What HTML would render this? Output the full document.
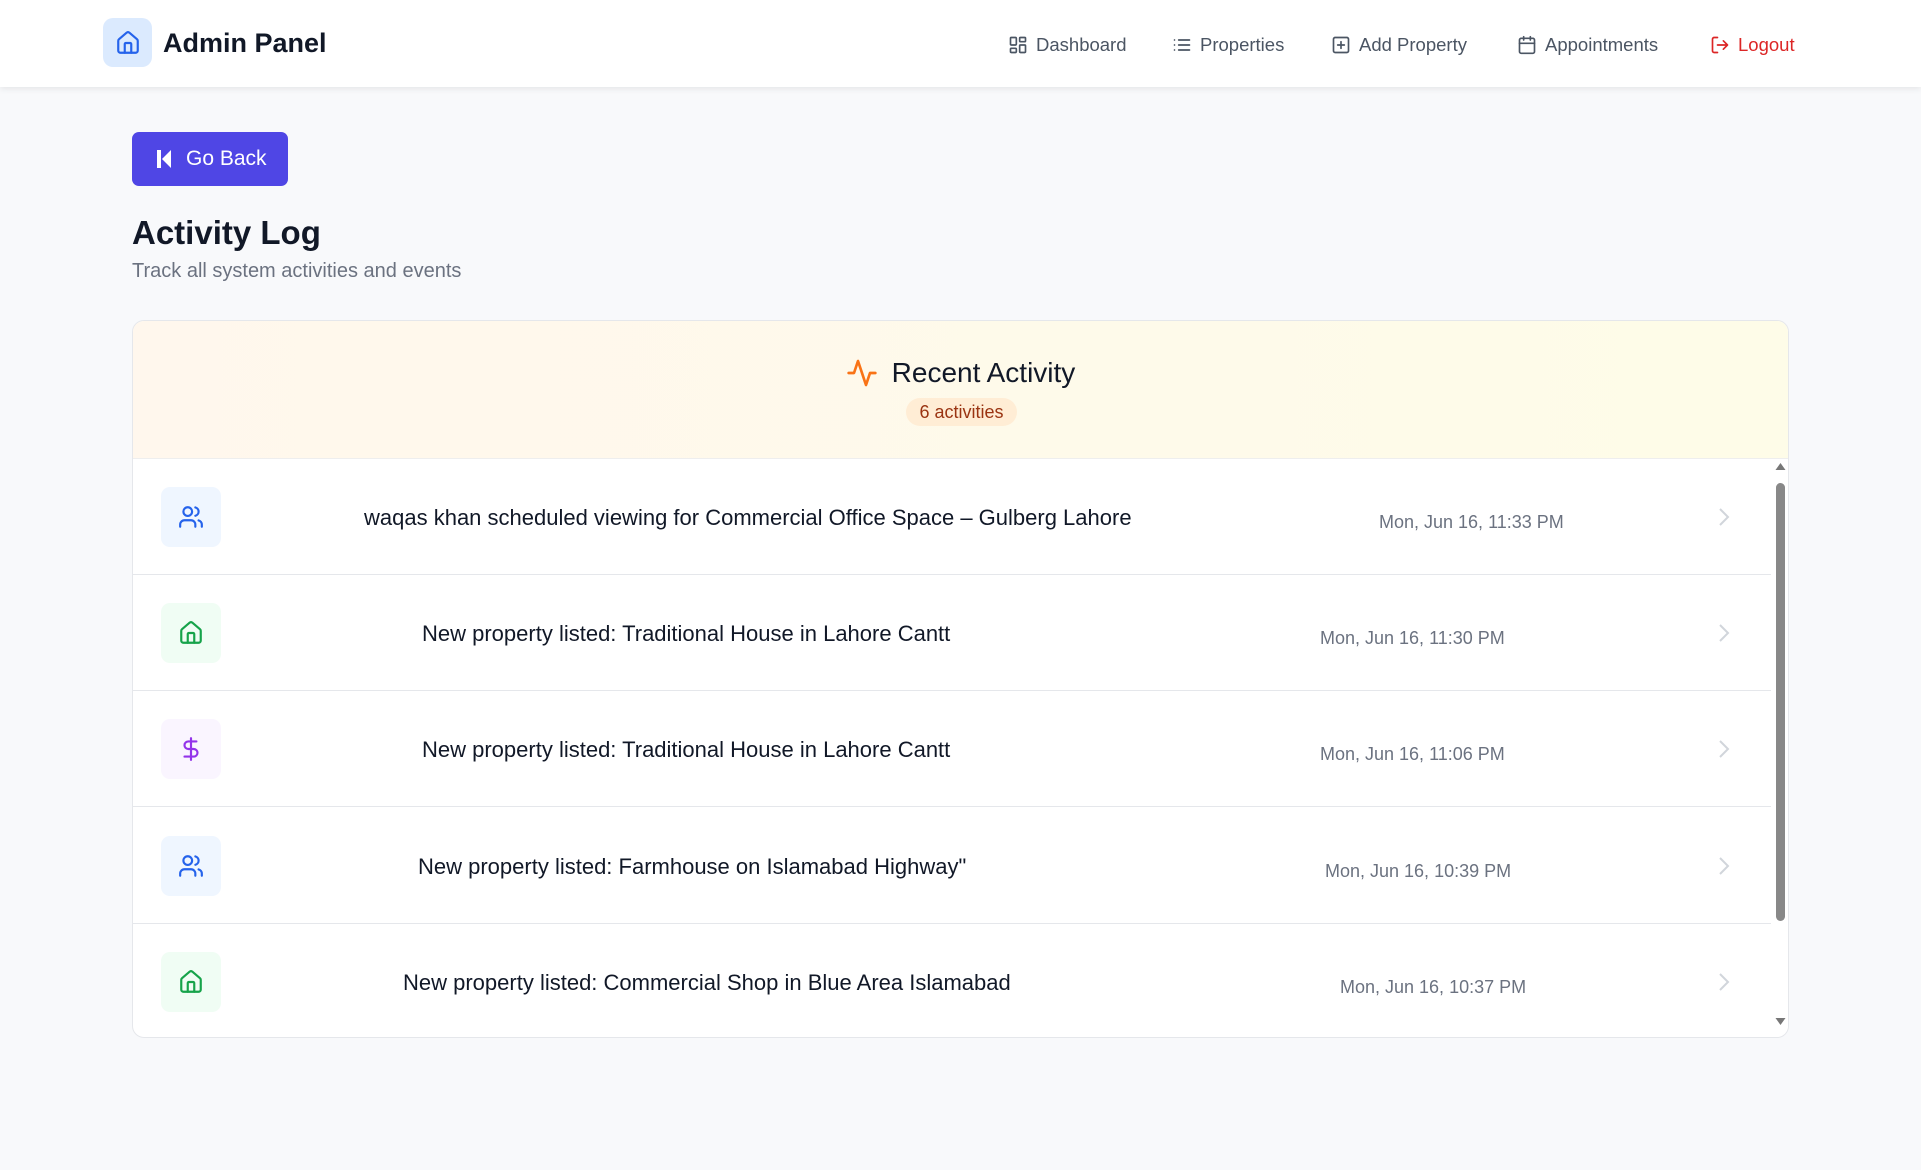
<!DOCTYPE html>
<html><head><meta charset="utf-8"><style>
*{box-sizing:border-box;margin:0;padding:0}
body{width:1921px;height:1170px;background:#f8f9fb;font-family:"Liberation Sans",sans-serif;position:relative;overflow:hidden;color:#111827}
.hdr{position:absolute;left:0;top:0;width:1921px;height:87px;background:#fff;box-shadow:0 2px 6px rgba(0,0,0,.08)}
.logo{position:absolute;left:103px;top:18px;width:49px;height:49px;border-radius:10px;background:#dbeafe;display:flex;align-items:center;justify-content:center}
.title{position:absolute;left:163px;top:28px;font-size:27px;font-weight:bold;color:#111827}
.nav{position:absolute;top:34px;font-size:18.5px;color:#4b5563;display:flex;align-items:center;gap:8px}
.nav svg{width:20px;height:20px}
.btn{position:absolute;left:132px;top:132px;width:156px;height:54px;background:#4f46e5;border-radius:7px;color:#fff;font-size:21px;display:flex;align-items:center;padding-left:24px;gap:14px}
h1{position:absolute;left:132px;top:214px;font-size:33px;font-weight:bold}
.sub{position:absolute;left:132px;top:260px;font-size:20px;color:#6b7280}
.card{position:absolute;left:132px;top:320px;width:1657px;height:718px;background:#fff;border:1px solid #e5e7eb;border-radius:12px;overflow:hidden}
.ch{position:absolute;left:0;top:0;width:100%;height:138px;background:linear-gradient(90deg,#fff7ed,#fefce8);border-bottom:1px solid #eee}
.rt{position:absolute;left:0;width:100%;top:36px;display:flex;justify-content:center;align-items:center;gap:14px;font-size:28px;color:#111827}
.badge{position:absolute;left:773px;top:77px;width:111px;height:28px;border-radius:14px;background:#ffedd5;color:#9a3412;font-size:18px;text-align:center;line-height:28px}
.row{position:absolute;left:0;width:1638px;height:116px;border-bottom:1px solid #e5e7eb}
.ic{position:absolute;left:28px;top:28px;width:60px;height:60px;border-radius:9px;display:flex;align-items:center;justify-content:center}
.ic svg{width:26px;height:26px}
.txt{position:absolute;top:46px;font-size:22px;white-space:nowrap;color:#111827}
.dt{position:absolute;top:53px;font-size:18px;white-space:nowrap;color:#6b7280}
.chev{position:absolute;left:1585px;top:48px}
.sb{position:absolute;left:1639px;top:138px;width:17px;height:580px;background:#fff}
</style></head><body>
<div class="hdr">
<div class="logo"><svg width="26" height="26" viewBox="0 0 24 24" fill="none" stroke="#2563eb" stroke-width="2" stroke-linecap="round" stroke-linejoin="round"><path d="M15 21v-8a1 1 0 0 0-1-1h-4a1 1 0 0 0-1 1v8"/><path d="M3 10a2 2 0 0 1 .709-1.528l7-5.999a2 2 0 0 1 2.582 0l7 5.999A2 2 0 0 1 21 10v9a2 2 0 0 1-2 2H5a2 2 0 0 1-2-2z"/></svg></div>
<div class="title">Admin Panel</div>
<div class="nav" style="left:1008px"><svg viewBox="0 0 24 24" fill="none" stroke="#4b5563" stroke-width="2"><rect x="3" y="3" width="7" height="9" rx="1"/><rect x="14" y="3" width="7" height="5" rx="1"/><rect x="14" y="12" width="7" height="9" rx="1"/><rect x="3" y="16" width="7" height="5" rx="1"/></svg>Dashboard</div>
<div class="nav" style="left:1172px"><svg viewBox="0 0 24 24" fill="none" stroke="#4b5563" stroke-width="2" stroke-linecap="round"><path d="M3 6h.01M3 12h.01M3 18h.01M8 6h13M8 12h13M8 18h13"/></svg>Properties</div>
<div class="nav" style="left:1331px"><svg viewBox="0 0 24 24" fill="none" stroke="#4b5563" stroke-width="2" stroke-linecap="round"><rect x="3" y="3" width="18" height="18" rx="2"/><path d="M8 12h8M12 8v8"/></svg>Add Property</div>
<div class="nav" style="left:1517px"><svg viewBox="0 0 24 24" fill="none" stroke="#4b5563" stroke-width="2" stroke-linecap="round"><rect x="3" y="4" width="18" height="18" rx="2"/><path d="M16 2v4M8 2v4M3 10h18"/></svg>Appointments</div>
<div class="nav" style="left:1710px;color:#dc2626"><svg viewBox="0 0 24 24" fill="none" stroke="#dc2626" stroke-width="2" stroke-linecap="round" stroke-linejoin="round"><path d="M9 21H5a2 2 0 0 1-2-2V5a2 2 0 0 1 2-2h4"/><path d="M16 17l5-5-5-5M21 12H9"/></svg>Logout</div>
</div>
<div class="btn"><svg width="16" height="20" viewBox="0 0 16 20"><rect x="1" y="1" width="4" height="18" fill="#fff"/><path d="M15 1v18L6 10z" fill="#fff"/></svg>Go Back</div>
<h1>Activity Log</h1>
<div class="sub">Track all system activities and events</div>
<div class="card">
<div class="ch">
<div class="rt"><svg width="32" height="32" viewBox="0 0 24 24" fill="none" stroke="#f97316" stroke-width="2" stroke-linecap="round" stroke-linejoin="round"><path d="M22 12h-4l-3 9L9 3l-3 9H2"/></svg>Recent Activity</div>
<div class="badge">6 activities</div>
</div>
<div class="row" style="top:138px"><div class="ic" style="background:#eff6ff"><svg viewBox="0 0 24 24" fill="none" stroke="#2563eb" stroke-width="2" stroke-linecap="round"><path d="M16 21v-2a4 4 0 0 0-4-4H6a4 4 0 0 0-4 4v2"/><circle cx="9" cy="7" r="4"/><path d="M22 21v-2a4 4 0 0 0-3-3.87M16 3.13a4 4 0 0 1 0 7.75"/></svg></div><div class="txt" style="left:231px">waqas khan scheduled viewing for Commercial Office Space – Gulberg Lahore</div><div class="dt" style="left:1246px">Mon, Jun 16, 11:33 PM</div><svg class="chev" width="12" height="20" viewBox="0 0 12 20" fill="none" stroke="#d1d5db" stroke-width="2"><path d="M2 2l8 8-8 8"/></svg></div>
<div class="row" style="top:254px"><div class="ic" style="background:#f0fdf4"><svg viewBox="0 0 24 24" fill="none" stroke="#16a34a" stroke-width="2" stroke-linecap="round" stroke-linejoin="round"><path d="M15 21v-8a1 1 0 0 0-1-1h-4a1 1 0 0 0-1 1v8"/><path d="M3 10a2 2 0 0 1 .709-1.528l7-5.999a2 2 0 0 1 2.582 0l7 5.999A2 2 0 0 1 21 10v9a2 2 0 0 1-2 2H5a2 2 0 0 1-2-2z"/></svg></div><div class="txt" style="left:289px">New property listed: Traditional House in Lahore Cantt</div><div class="dt" style="left:1187px">Mon, Jun 16, 11:30 PM</div><svg class="chev" width="12" height="20" viewBox="0 0 12 20" fill="none" stroke="#d1d5db" stroke-width="2"><path d="M2 2l8 8-8 8"/></svg></div>
<div class="row" style="top:370px"><div class="ic" style="background:#faf5ff"><svg viewBox="0 0 24 24" fill="none" stroke="#9333ea" stroke-width="2" stroke-linecap="round"><path d="M12 2v20M17 5H9.5a3.5 3.5 0 0 0 0 7h5a3.5 3.5 0 0 1 0 7H6"/></svg></div><div class="txt" style="left:289px">New property listed: Traditional House in Lahore Cantt</div><div class="dt" style="left:1187px">Mon, Jun 16, 11:06 PM</div><svg class="chev" width="12" height="20" viewBox="0 0 12 20" fill="none" stroke="#d1d5db" stroke-width="2"><path d="M2 2l8 8-8 8"/></svg></div>
<div class="row" style="top:487px"><div class="ic" style="background:#eff6ff"><svg viewBox="0 0 24 24" fill="none" stroke="#2563eb" stroke-width="2" stroke-linecap="round"><path d="M16 21v-2a4 4 0 0 0-4-4H6a4 4 0 0 0-4 4v2"/><circle cx="9" cy="7" r="4"/><path d="M22 21v-2a4 4 0 0 0-3-3.87M16 3.13a4 4 0 0 1 0 7.75"/></svg></div><div class="txt" style="left:285px">New property listed: Farmhouse on Islamabad Highway"</div><div class="dt" style="left:1192px">Mon, Jun 16, 10:39 PM</div><svg class="chev" width="12" height="20" viewBox="0 0 12 20" fill="none" stroke="#d1d5db" stroke-width="2"><path d="M2 2l8 8-8 8"/></svg></div>
<div class="row" style="top:603px"><div class="ic" style="background:#f0fdf4"><svg viewBox="0 0 24 24" fill="none" stroke="#16a34a" stroke-width="2" stroke-linecap="round" stroke-linejoin="round"><path d="M15 21v-8a1 1 0 0 0-1-1h-4a1 1 0 0 0-1 1v8"/><path d="M3 10a2 2 0 0 1 .709-1.528l7-5.999a2 2 0 0 1 2.582 0l7 5.999A2 2 0 0 1 21 10v9a2 2 0 0 1-2 2H5a2 2 0 0 1-2-2z"/></svg></div><div class="txt" style="left:270px">New property listed: Commercial Shop in Blue Area Islamabad</div><div class="dt" style="left:1207px">Mon, Jun 16, 10:37 PM</div><svg class="chev" width="12" height="20" viewBox="0 0 12 20" fill="none" stroke="#d1d5db" stroke-width="2"><path d="M2 2l8 8-8 8"/></svg></div>
<div class="sb"><svg width="17" height="580" viewBox="0 0 17 580"><path d="M8.5 4l5 7h-10z" fill="#777"/><rect x="4" y="24" width="9" height="438" rx="4.5" fill="#888"/><path d="M8.5 566l5-7h-10z" fill="#777"/></svg></div>
</div>
</body></html>
